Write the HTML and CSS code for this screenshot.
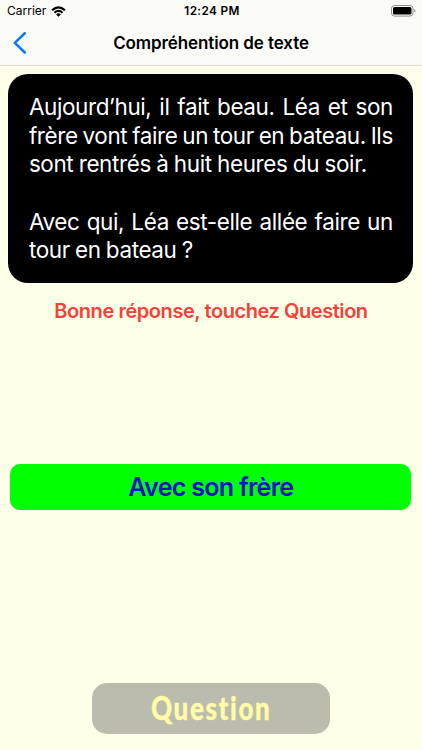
FILE: index.html
```
<!DOCTYPE html>
<html lang="fr">
    <head>
        <meta charset="UTF-8">
        <meta name="viewport" content="width=device-width, initial-scale=1.0">
        <title>Compréhention de texte</title>
        <link rel="stylesheet" href="styles.css">
    </head>
    <body>
        <header>
            <div class="status"><!--Barre d'état-->
                <div class="carrier">
                    <span>Carrier</span>
                    <svg class="wifi" width="15" height="11" viewBox="0 0 15 11">
                        <path d="M0.3 3.6 Q7.5 -3 14.7 3.6 L13.2 5.1 Q7.5 -0.1 1.8 5.1 Z"/>
                        <path d="M2.7 6 Q7.5 1.7 12.3 6 L10.8 7.5 Q7.5 4.6 4.2 7.5 Z"/>
                        <path d="M5.1 8.4 Q7.5 6.3 9.9 8.4 L7.5 10.8 Z"/>
                    </svg>
                </div>
                <span class="time">12:24 PM</span>
                <svg class="battery" width="26" height="12" viewBox="0 0 26 12">
                    <rect x="0.5" y="0.5" width="21.5" height="10.6" rx="3" fill="none" stroke="#8e8e8c"/>
                    <rect x="2" y="2" width="18.5" height="7.6" rx="1.5"/>
                    <path d="M23.2 4 Q25.8 5.8 23.2 7.6 Z" fill="#8e8e8c"/>
                </svg>
            </div>
            <div class="nav">
                <svg class="back" width="14" height="22" viewBox="0 0 14 22">
                    <path d="M11.8 1.3 L1.8 10.9 L11.8 20.5" fill="none" stroke="#0f7bf0" stroke-width="2.6" stroke-linecap="round" stroke-linejoin="round"/>
                </svg>
                <h1>Compréhention de texte</h1>
            </div>
        </header>
        <main>
            <div class="card"><!--Texte et question-->
                <p class="full">Aujourd’hui, il fait beau. Léa et son</p>
                <p class="full">frère vont faire un tour en bateau. Ils</p>
                <p class="l3">sont rentrés à huit heures du soir.</p>
                <p class="full gap">Avec qui, Léa est-elle allée faire un</p>
                <p class="l5">tour en bateau ?</p>
            </div>
            <p class="result">Bonne réponse, touchez Question</p>
            <div class="answer">Avec son frère</div>
            <div class="question"><span>Question</span></div>
        </main>
    </body>
</html>
```
FILE: styles.css
```
*, *::before, *::after {
    box-sizing: border-box;
}

html,
body,
p,
h1 {
    margin: 0;
    padding: 0;
}

body {
    height: 750px;
    overflow: hidden;
    background-color: #feffe8;
    font-family: Inter, "Liberation Sans", sans-serif;
    color: black;
}

svg {
    display: block;
}

/*Barre du haut*/

header {
    height: 66px;
    background-color: #fafaf7;
    border-bottom: 1px solid #dcdcd4;
}

.status {
    display: grid;
    grid-template-columns: 1fr auto 1fr;
    align-items: center;
    height: 22px;
    padding: 0 5px 0 7px;
    font-size: 12px;
    line-height: 22px;
}

.carrier {
    display: flex;
    align-items: center;
    gap: 5px;
}

.time {
    font-size: 11.8px;
    font-weight: 600;
    letter-spacing: 0.35px;
}

.battery {
    justify-self: end;
}

.nav {
    display: grid;
    grid-template-columns: 14px 1fr 14px;
    align-items: center;
    height: 42px;
    padding: 0 13px;
}

h1 {
    text-align: center;
    font-size: 17px;
    font-weight: 600;
    letter-spacing: -0.1px;
}

/*Contenu*/

.card {
    height: 209px;
    margin: 7.5px 8.6px 0 8.4px;
    padding: 19.5px 20.5px 0;
    border-radius: 20px;
    background-color: black;
    color: white;
    font-size: 22.5px;
    line-height: 28.5px;
    letter-spacing: -0.4px;
    word-spacing: -1.5px;
    white-space: nowrap;
}

.full {
    text-align-last: justify;
}

.l3 {
    width: 338px;
    text-align-last: justify;
}

.l5 {
    width: 164px;
    text-align-last: justify;
}

.gap {
    margin-top: 29px;
}

.result {
    margin-top: 13.5px;
    height: 30px;
    line-height: 30px;
    text-align: center;
    font-size: 20px;
    font-weight: 600;
    letter-spacing: -0.44px;
    color: #f0433a;
}

.answer {
    height: 46px;
    margin: 137.5px 10.6px 0 10.4px;
    border-radius: 10px;
    background-color: #00ff00;
    color: #0a10c8;
    text-align: center;
    font-size: 25px;
    font-weight: 600;
    line-height: 47px;
    letter-spacing: -0.7px;
}

.question {
    width: 238px;
    height: 51px;
    margin: 173.5px 0 0 92px;
    border-radius: 15px;
    background-color: #bbbbae;
    color: #fffba6;
    text-align: center;
    font-family: Lato, sans-serif;
    font-size: 33px;
    font-weight: 900;
    line-height: 48px;
    letter-spacing: 2px;
}

.question span {
    display: inline-block;
    transform: scaleX(0.79);
    -webkit-text-stroke: 0.4px #fffba6;
}
```
